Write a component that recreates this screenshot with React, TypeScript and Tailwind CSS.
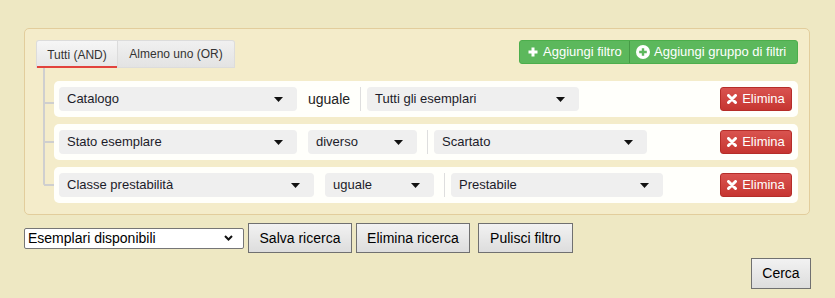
import React from 'react';

// triangolino dei menu a tendina
const Caret = () => (
  <svg width="9" height="5" viewBox="0 0 9 5" className="shrink-0">
    <polygon points="0,0 9,0 4.5,5" fill="#111" />
  </svg>
);

const FakeSelect = ({ label, width }: { label: string; width: string }) => (
  <div className={`${width} h-[24px] bg-[#efefef] rounded-[4px] flex items-center justify-between pl-[8px] pr-[14px] text-[13px] text-[#1c1c2a]`}>
    <span>{label}</span>
    <Caret />
  </div>
);

const Divider = () => <div className="w-px h-[24px] bg-[#dedede] ml-[10px] mr-[6px]" />;

const DeleteButton = () => (
  <button className="ml-auto w-[72px] h-[24px] rounded-[3px] border border-[#b52d29] bg-gradient-to-b from-[#d9534f] to-[#c63531] text-white text-[13px] flex items-center justify-center gap-[5px]">
    <svg width="10" height="10" viewBox="0 0 10 10">
      <path d="M1.5 1.5 L8.5 8.5 M8.5 1.5 L1.5 8.5" stroke="white" strokeWidth="3" strokeLinecap="round" />
    </svg>
    <span>Elimina</span>
  </button>
);

type Rule = { field: string; fieldW: string; op: string; opSelect: boolean; value: string; valueW: string; tick: string };

const rules: Rule[] = [
  { field: 'Catalogo', fieldW: 'w-[238px]', op: 'uguale', opSelect: false, value: 'Tutti gli esemplari', valueW: 'w-[212px]', tick: 'top-[21px]' },
  { field: 'Stato esemplare', fieldW: 'w-[238px]', op: 'diverso', opSelect: true, value: 'Scartato', valueW: 'w-[213px]', tick: 'top-[17px]' },
  { field: 'Classe prestabilità', fieldW: 'w-[255px]', op: 'uguale', opSelect: true, value: 'Prestabile', valueW: 'w-[212px]', tick: 'top-[17px]' },
];

const WinButton = ({ children, className = '' }: { children: React.ReactNode; className?: string }) => (
  <button className={`border border-[#707070] bg-gradient-to-b from-[#f2f2f2] to-[#dddddd] text-[14px] text-black ${className}`}>
    {children}
  </button>
);

export default function App() {
  return (
    <div className="min-h-screen w-full bg-[#eee8c3] pt-[28px] px-[24px] font-['Liberation_Sans',Arial,sans-serif]">
      <div className="w-[786px] h-[187px] rounded-[5px] border border-[#e2cd9c] bg-[#f4ecca] pt-[11px] px-[11px]">
        {/* intestazione: AND / OR + pulsanti verdi */}
        <div className="flex items-start justify-between">
          <div className="flex text-[12px] text-[#333]">
            <div className="w-[82px] h-[28px] flex items-center justify-center rounded-tl-[3px] border border-[#dcdcdc] border-b-0 bg-gradient-to-b from-[#f6f6f6] to-[#e6e6e6] shadow-[inset_0_-2px_0_#e2433d]">
              Tutti (AND)
            </div>
            <div className="w-[117px] h-[28px] flex items-center justify-center rounded-tr-[3px] border border-l-0 border-[#dcdcdc] bg-gradient-to-b from-[#f0f0f0] to-[#e3e3e3]">
              Almeno uno (OR)
            </div>
          </div>
          <div className="flex h-[24px] text-white text-[13px] rounded-[3px] border border-[#4cae4c] bg-[#5cb85c] overflow-hidden">
            <button className="w-[109px] flex items-center gap-[5px] pl-[8px]">
              <svg width="10" height="10" viewBox="0 0 10 10">
                <path d="M5 0.5 V9.5 M0.5 5 H9.5" stroke="white" strokeWidth="3" />
              </svg>
              <span>Aggiungi filtro</span>
            </button>
            <div className="w-px bg-[#469a46]" />
            <button className="w-[167px] flex items-center gap-[4px] pl-[6px]">
              <svg width="14" height="14" viewBox="0 0 14 14">
                <circle cx="7" cy="7" r="7" fill="white" />
                <path d="M7 3.2 V10.8 M3.2 7 H10.8" stroke="#5cb85c" strokeWidth="2.4" />
              </svg>
              <span>Aggiungi gruppo di filtri</span>
            </button>
          </div>
        </div>

        {/* regole */}
        <div className="relative ml-[18px] mt-[13px] flex flex-col gap-[7px]">
          <div className="absolute left-[-11px] top-[-13px] w-[2px] h-[117px] bg-[#cfcfcf] rounded-b-[2px]" />
          {rules.map((r) => (
            <div key={r.field} className="relative h-[36px] rounded-[5px] bg-[#fffffb] flex items-center pl-[5px] pr-[6px]">
              <div className={`absolute left-[-10px] ${r.tick} w-[10px] h-[2px] bg-[#cfcfcf]`} />
              <FakeSelect label={r.field} width={r.fieldW} />
              <div className="ml-[11px]">
                {r.opSelect ? (
                  <FakeSelect label={r.op} width="w-[109px]" />
                ) : (
                  <span className="text-[14px] text-[#222]">{r.op}</span>
                )}
              </div>
              <Divider />
              <FakeSelect label={r.value} width={r.valueW} />
              <DeleteButton />
            </div>
          ))}
        </div>
      </div>

      {/* ricerche salvate */}
      <div className="flex items-center gap-[4px] mt-[8px]">
        <div className="w-[220px] h-[21px] bg-white border border-[#767676] rounded-[2px] flex items-center justify-between pl-[3px] pr-[10px] text-[14px] text-black">
          <span>Esemplari disponibili</span>
          <svg width="9" height="6" viewBox="0 0 9 6">
            <polyline points="1,1 4.5,4.5 8,1" fill="none" stroke="#111" strokeWidth="2" />
          </svg>
        </div>
        <WinButton className="w-[104px] h-[30px]">Salva ricerca</WinButton>
        <WinButton className="w-[114px] h-[30px] ml-[0px]">Elimina ricerca</WinButton>
        <WinButton className="w-[95px] h-[30px] ml-[4px]">Pulisci filtro</WinButton>
      </div>
      <div className="flex justify-end w-[787px] mt-[5px]">
        <WinButton className="w-[60px] h-[31px]">Cerca</WinButton>
      </div>
    </div>
  );
}
